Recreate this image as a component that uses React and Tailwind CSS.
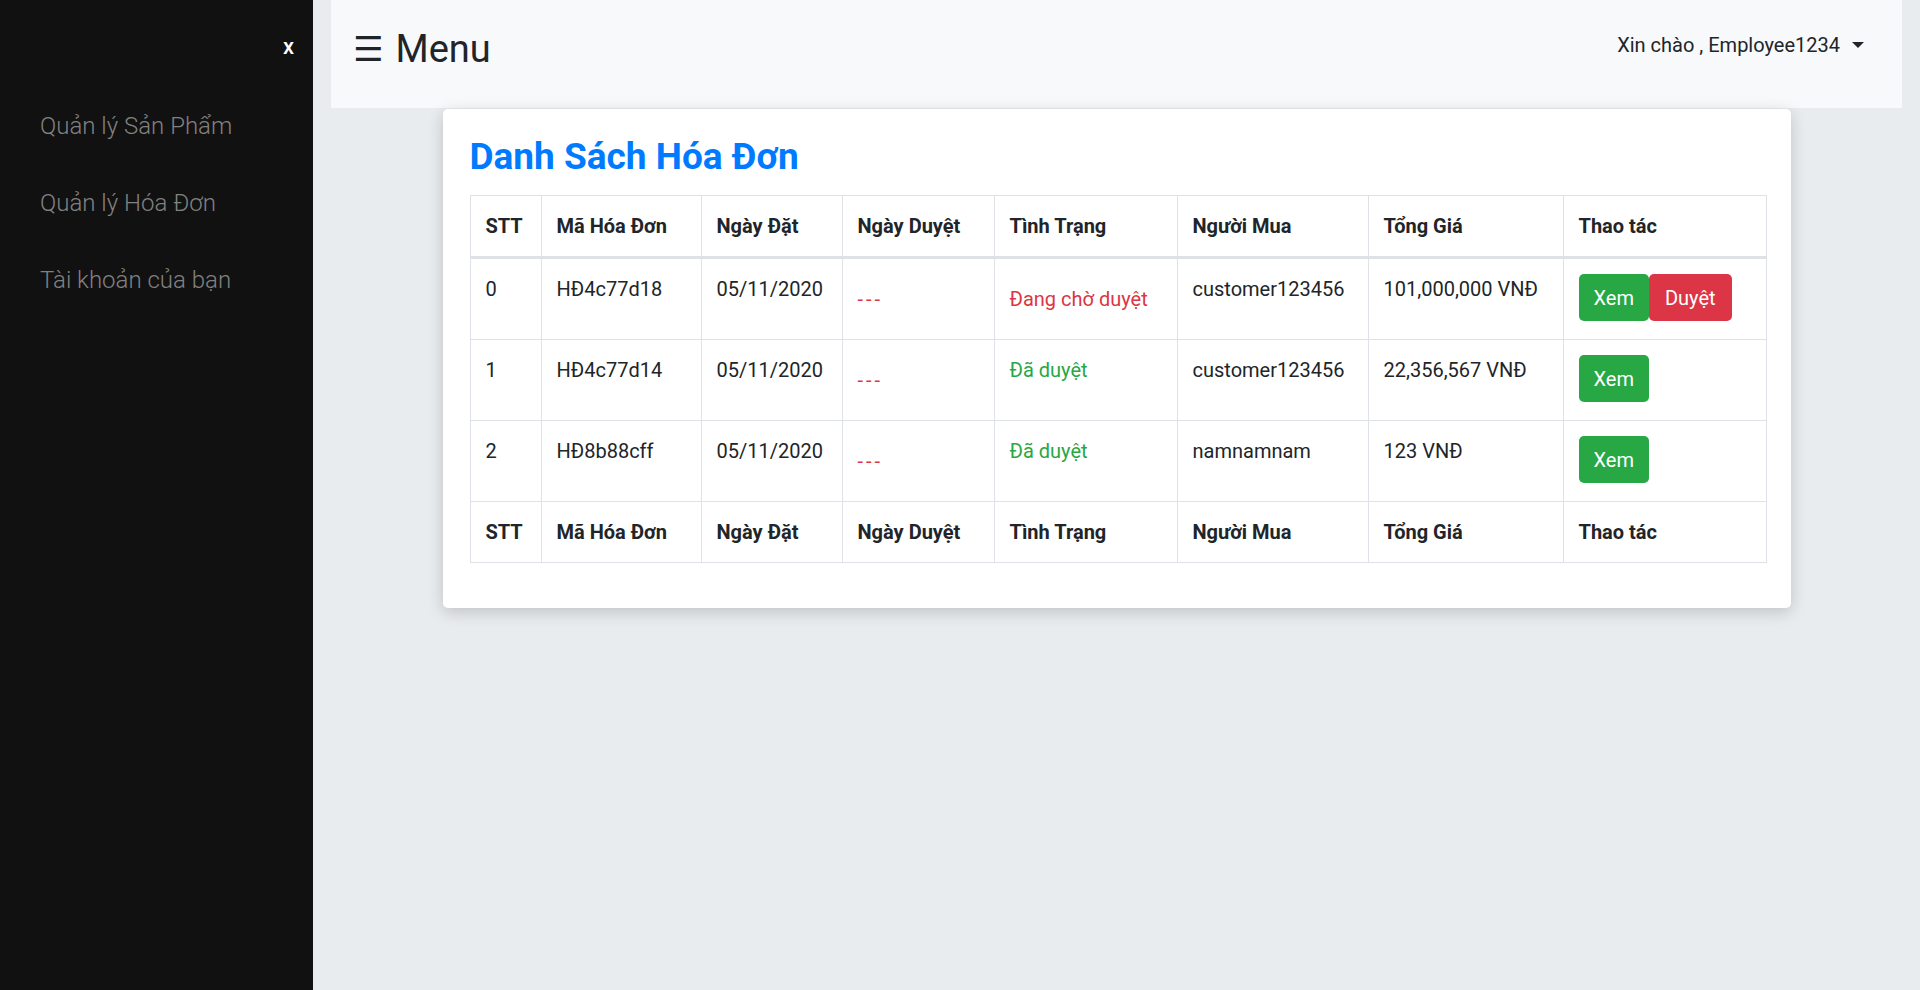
import React from "react";

const FONT = { fontFamily: 'Roboto, "Noto Sans", "Liberation Sans", sans-serif' };

const rows = [
  { stt: 0, ma: "HĐ4c77d18", dat: "05/11/2020", trangThai: "Đang chờ duyệt", pending: true, nguoi: "customer123456", gia: "101,000,000 VNĐ" },
  { stt: 1, ma: "HĐ4c77d14", dat: "05/11/2020", trangThai: "Đã duyệt", pending: false, nguoi: "customer123456", gia: "22,356,567 VNĐ" },
  { stt: 2, ma: "HĐ8b88cff", dat: "05/11/2020", trangThai: "Đã duyệt", pending: false, nguoi: "namnamnam", gia: "123 VNĐ" },
];

const headers = ["STT", "Mã Hóa Đơn", "Ngày Đặt", "Ngày Duyệt", "Tình Trạng", "Người Mua", "Tổng Giá", "Thao tác"];
const widths = [71, 160, 141, 152, 183, 191, 195, 203];

function Sidebar() {
  return (
    <aside className="w-[313px] shrink-0 bg-[#111111] min-h-[990px] flex flex-col">
      <div className="h-[87px] flex justify-end pr-[19px] pt-[36px]">
        <span className="text-white text-[22px] font-medium leading-none">x</span>
      </div>
      {["Quản lý Sản Phẩm", "Quản lý Hóa Đơn", "Tài khoản của bạn"].map((t) => (
        <a key={t} href="#" className="h-[77px] flex items-center pl-[40px] text-[24px] font-light text-[#818181]">
          {t}
        </a>
      ))}
    </aside>
  );
}

function Cell({ children, className = "" }) {
  return <td className={"border border-[#dee2e6] px-[15px] pt-[15px] pb-[18px] align-top " + className}>{children}</td>;
}

export default function App() {
  return (
    <div className="flex min-h-[990px] bg-[#e9ecef] text-[#212529]" style={FONT}>
      <Sidebar />
      <main className="flex-1 px-[18px]">
        <nav className="h-[108px] bg-[#f8f9fa] flex items-center justify-between pl-[22px] pr-[38px]">
          <div className="flex items-center gap-[12px] text-[38px] leading-none text-[#212529] -mt-[10px]">
            <span style={{ fontFamily: '"DejaVu Sans", sans-serif' }} className="text-[34px]">☰</span>
            <span>Menu</span>
          </div>
          <div className="flex items-center gap-[12px] text-[20px] text-[#212529] -mt-[18px]">
            <span>Xin chào , Employee1234</span>
            <span className="w-0 h-0 border-l-[6px] border-r-[6px] border-t-[6px] border-l-transparent border-r-transparent border-t-[#212529]" />
          </div>
        </nav>

        <section className="mx-auto mt-[1px] w-[1348px] bg-white rounded-[5px] shadow-[0_4px_16px_rgba(0,0,0,0.18)] px-[27px] pt-[26px] pb-[45px]">
          <h3 className="text-[37px] font-bold text-[#007bff] leading-[1.2] mb-[16px]">Danh Sách Hóa Đơn</h3>
          <table className="table-fixed border-collapse w-[1296px] text-[20px] leading-[30px]">
            <colgroup>
              {widths.map((w, i) => (
                <col key={i} style={{ width: w }} />
              ))}
            </colgroup>
            <thead>
              <tr>
                {headers.map((h) => (
                  <th key={h} className="border border-[#dee2e6] border-b-[3px] px-[15px] py-[15px] text-left font-bold">
                    {h}
                  </th>
                ))}
              </tr>
            </thead>
            <tbody>
              {rows.map((r) => (
                <tr key={r.stt}>
                  <Cell>{r.stt}</Cell>
                  <Cell>{r.ma}</Cell>
                  <Cell>{r.dat}</Cell>
                  <Cell>
                    <div className="pt-[10px] text-[#dc3545] tracking-[3px]">---</div>
                  </Cell>
                  <Cell>
                    {r.pending ? (
                      <div className="pt-[10px] text-[#dc3545]">{r.trangThai}</div>
                    ) : (
                      <div className="text-[#28a745]">{r.trangThai}</div>
                    )}
                  </Cell>
                  <Cell>{r.nguoi}</Cell>
                  <Cell>{r.gia}</Cell>
                  <Cell>
                    <div className="flex">
                      <button className="h-[47px] px-[15px] rounded-[5px] bg-[#28a745] text-white">Xem</button>
                      {r.pending ? (
                        <button className="h-[47px] px-[16px] rounded-[5px] bg-[#dc3545] text-white">Duyệt</button>
                      ) : null}
                    </div>
                  </Cell>
                </tr>
              ))}
            </tbody>
            <tfoot>
              <tr>
                {headers.map((h) => (
                  <th key={h} className="border border-[#dee2e6] px-[15px] py-[15px] text-left font-bold">
                    {h}
                  </th>
                ))}
              </tr>
            </tfoot>
          </table>
        </section>
      </main>
    </div>
  );
}
